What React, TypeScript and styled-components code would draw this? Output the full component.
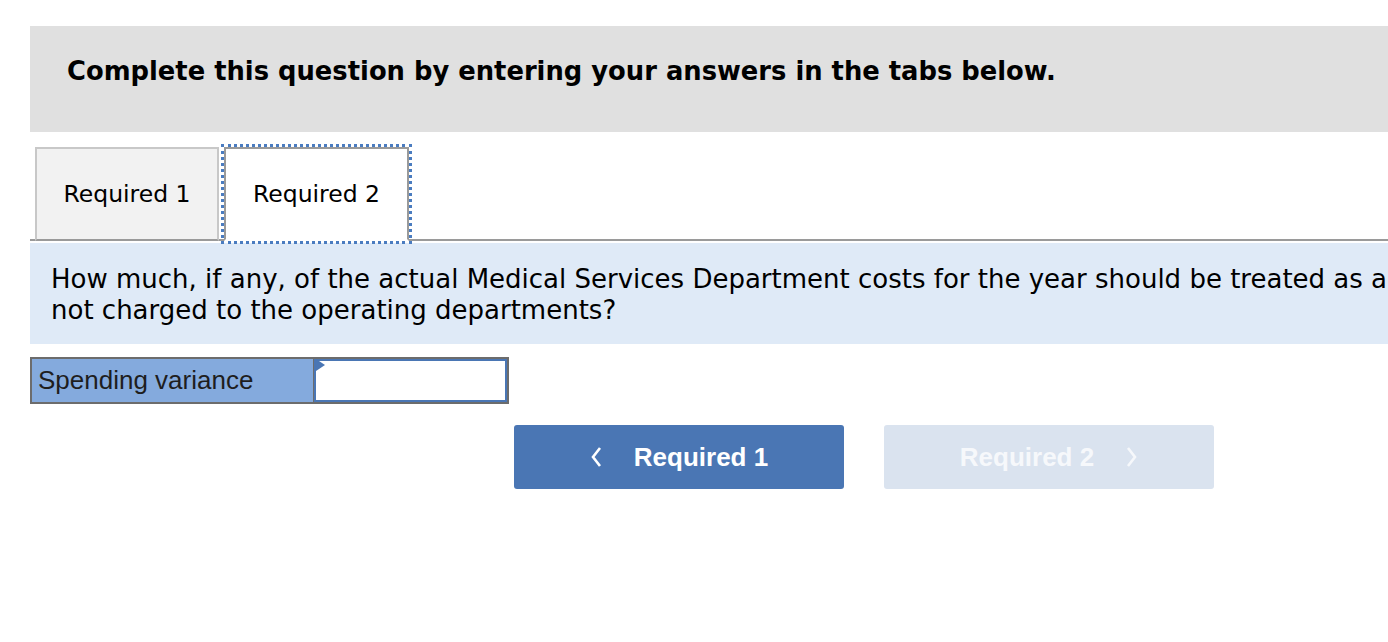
import React from "react";
import styled, { createGlobalStyle } from "styled-components";

const GlobalStyle = createGlobalStyle`
  html, body {
    margin: 0;
    padding: 0;
    background: #fff;
    overflow: hidden;
  }
`;

const Page = styled.div`
  width: 1730px;
  padding: 26px 0 0 30px;
  font-family: "DejaVu Sans", Verdana, sans-serif;
  color: #000;
`;

const Banner = styled.div`
  height: 106px;
  background: #e0e0e0;
  padding-left: 37px;
  display: flex;
  align-items: center;
  box-sizing: border-box;
`;

const BannerTitle = styled.h2`
  margin: 0 0 16px;
  font-size: 25.8px;
  font-weight: 700;
`;

const TabBar = styled.div`
  display: flex;
  align-items: flex-end;
  gap: 5px;
  margin-top: 15px;
  padding-left: 5px;
  border-bottom: 2px solid #9a9a9a;
`;

const Tab = styled.button<{ $active?: boolean }>`
  width: ${(p) => (p.$active ? "185px" : "184px")};
  height: 94px;
  padding: 0;
  margin: 0 0 -2px;
  font-family: inherit;
  font-size: 23.5px;
  color: #000;
  background: ${(p) => (p.$active ? "#fff" : "#f2f2f2")};
  border: 2px solid ${(p) => (p.$active ? "#9a9a9a" : "#c8c8c8")};
  border-bottom: ${(p) => (p.$active ? "2px solid #fff" : "2px solid #9a9a9a")};
  outline: ${(p) => (p.$active ? "3px dotted #4a7cc0" : "none")};
  outline-offset: 0;
  cursor: pointer;
`;

const Question = styled.div`
  margin-top: 2px;
  background: #dfeaf7;
  padding: 21px 21px 18px;
  font-size: 26px;
  line-height: 31px;
`;

const AnswerRow = styled.div`
  display: flex;
  width: 479px;
  height: 47px;
  margin-top: 13px;
  border: 2px solid #6c6c6c;
  box-sizing: border-box;
  background: #6c6c6c;
`;

const Label = styled.div`
  width: 281px;
  background: #84aadd;
  font-family: "Liberation Sans", Arial, sans-serif;
  font-size: 26px;
  color: #1e1e1e;
  display: flex;
  align-items: center;
  padding-left: 6px;
  box-sizing: border-box;
`;

const InputCell = styled.div`
  position: relative;
  flex: 1;
  margin-left: 1px;
  background: #fff;
  border: 2px solid #4a76b4;
`;

const Marker = styled.span`
  position: absolute;
  top: 0;
  left: 0;
  width: 0;
  height: 0;
  border-top: 6px solid transparent;
  border-bottom: 6px solid transparent;
  border-left: 9px solid #4a76b4;
  transform: translateY(-2px);
`;

const Input = styled.input`
  width: 100%;
  height: 100%;
  border: none;
  outline: none;
  background: transparent;
  box-sizing: border-box;
`;

const Nav = styled.div`
  display: flex;
  gap: 40px;
  margin: 21px 0 0 484px;
`;

const NavButton = styled.button<{ $disabled?: boolean }>`
  width: 330px;
  height: 64px;
  border: none;
  border-radius: 3px;
  background: ${(p) => (p.$disabled ? "#dae3ef" : "#4a76b4")};
  color: ${(p) => (p.$disabled ? "#f6f8fb" : "#fff")};
  font-family: "Liberation Sans", Arial, sans-serif;
  font-weight: 700;
  font-size: 26px;
  display: flex;
  align-items: center;
  justify-content: center;
  gap: 32px;
  cursor: ${(p) => (p.$disabled ? "default" : "pointer")};
`;

const Chevron = ({ dir }: { dir: "left" | "right" }) => (
  <svg width="12" height="22" viewBox="0 0 12 22" fill="none">
    <path
      d={dir === "left" ? "M10 2 L3 11 L10 20" : "M2 2 L9 11 L2 20"}
      stroke="currentColor"
      strokeWidth="2.6"
    />
  </svg>
);

export default function App() {
  return (
    <>
      <GlobalStyle />
      <Page>
        <Banner>
          <BannerTitle>Complete this question by entering your answers in the tabs below.</BannerTitle>
        </Banner>
        <TabBar>
          <Tab>Required 1</Tab>
          <Tab $active>Required 2</Tab>
        </TabBar>
        <Question>
          How much, if any, of the actual Medical Services Department costs for the year should be treated as a
          spending variance and not charged to the operating departments?
        </Question>
        <AnswerRow>
          <Label>Spending variance</Label>
          <InputCell>
            <Marker />
            <Input aria-label="Spending variance" />
          </InputCell>
        </AnswerRow>
        <Nav>
          <NavButton>
            <Chevron dir="left" />
            Required 1
          </NavButton>
          <NavButton $disabled>
            Required 2
            <Chevron dir="right" />
          </NavButton>
        </Nav>
      </Page>
    </>
  );
}
